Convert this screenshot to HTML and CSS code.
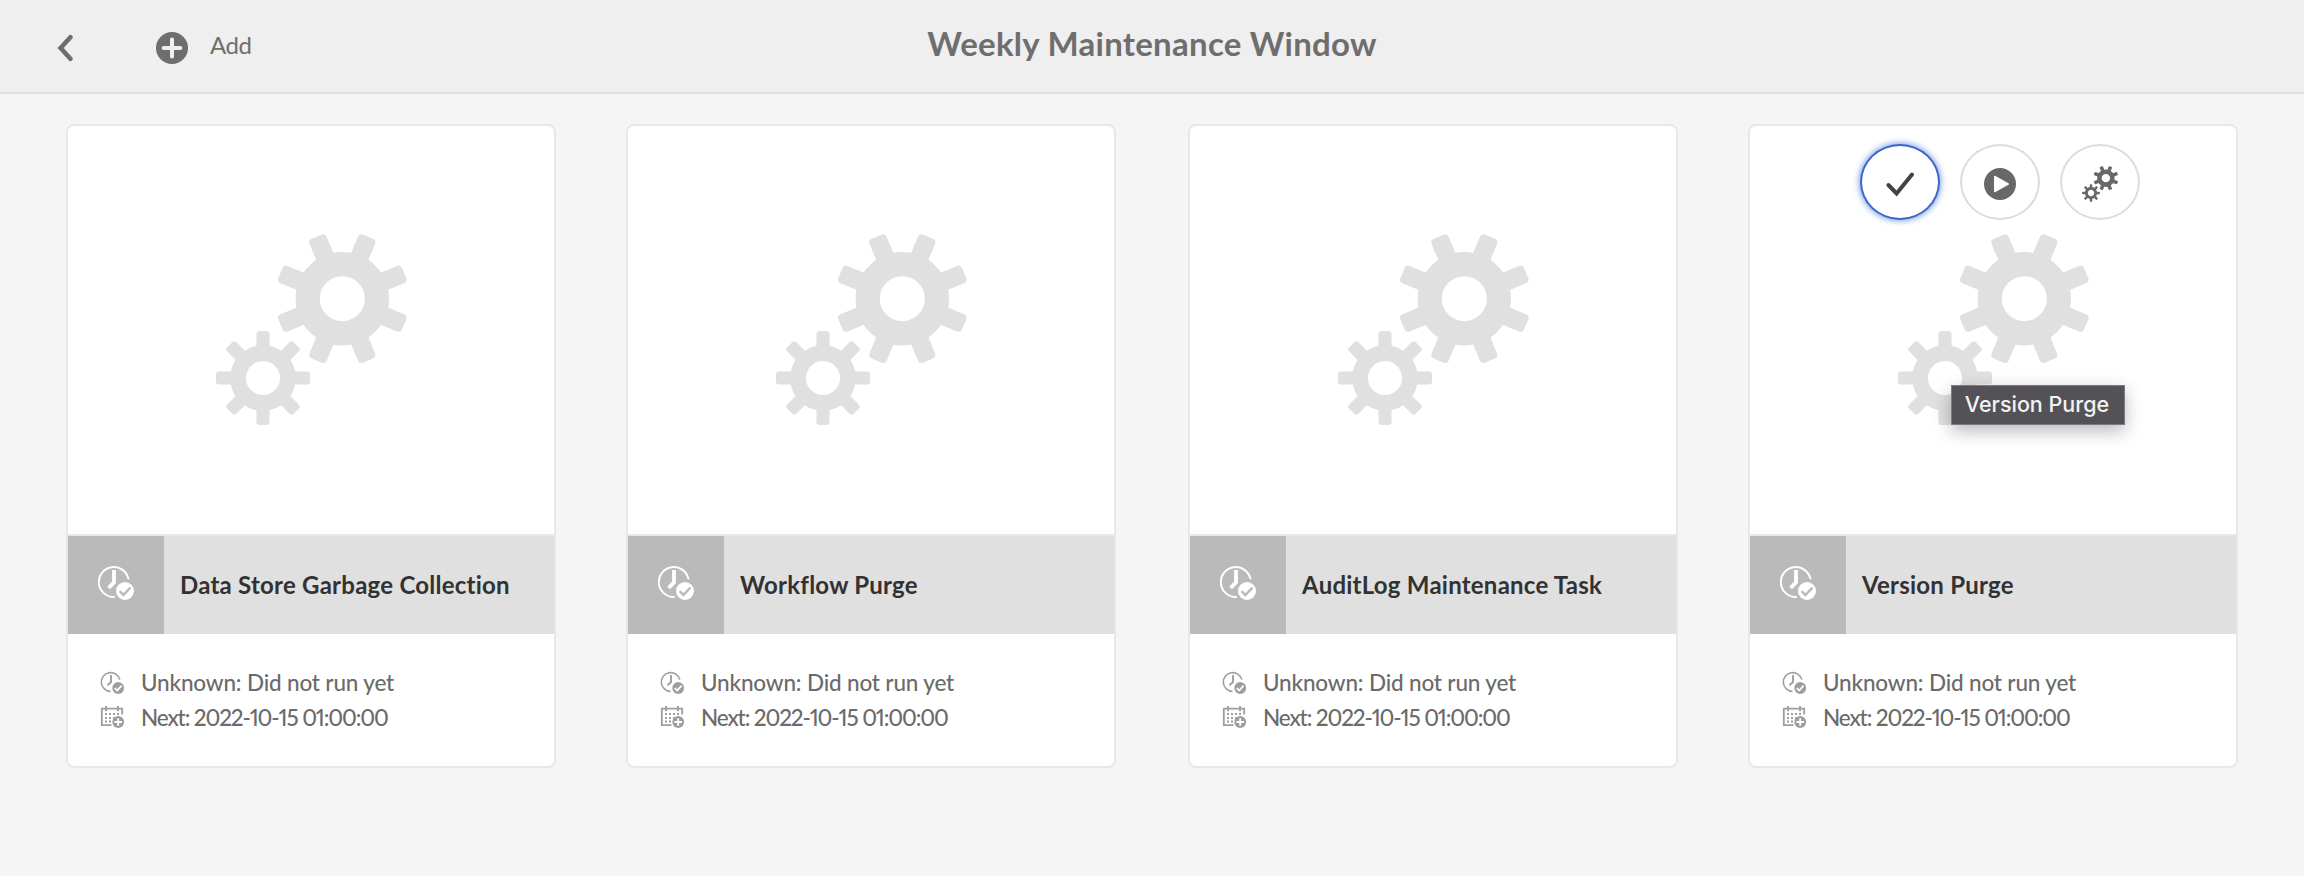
FILE: index.html
```
<!DOCTYPE html>
<html lang="en">
<head>
<meta charset="utf-8">
<title>Weekly Maintenance Window</title>
<link rel="stylesheet" href="styles.css">
</head>
<body>
<svg class="defs" aria-hidden="true">
  <symbol id="gears" viewBox="0 0 192 192">
    <g transform="translate(127.3 64.7)">
      <circle r="34.6" fill="none" stroke="currentColor" stroke-width="24.2"/>
      <g id="big-teeth">
        <rect id="big-tooth" x="-9.3" y="-67" width="18.6" height="27" rx="4" transform="rotate(22.5)"/>
        <use href="#big-tooth" transform="rotate(45)"/><use href="#big-tooth" transform="rotate(90)"/>
        <use href="#big-tooth" transform="rotate(135)"/><use href="#big-tooth" transform="rotate(180)"/>
        <use href="#big-tooth" transform="rotate(225)"/><use href="#big-tooth" transform="rotate(270)"/>
        <use href="#big-tooth" transform="rotate(315)"/>
      </g>
    </g>
    <g transform="translate(48 144)">
      <circle r="24.9" fill="none" stroke="currentColor" stroke-width="15.8"/>
      <rect id="small-tooth" x="-6.5" y="-47" width="13" height="20" rx="3"/>
      <use href="#small-tooth" transform="rotate(45)"/><use href="#small-tooth" transform="rotate(90)"/>
      <use href="#small-tooth" transform="rotate(135)"/><use href="#small-tooth" transform="rotate(180)"/>
      <use href="#small-tooth" transform="rotate(225)"/><use href="#small-tooth" transform="rotate(270)"/>
      <use href="#small-tooth" transform="rotate(315)"/>
    </g>
  </symbol>
  <symbol id="clock-lg" viewBox="0 0 36 36">
    <path d="M16 31A15 15 0 1 1 30.4 12.6" fill="none" stroke="currentColor" stroke-width="2" stroke-linecap="round"/>
    <path d="M16 4V16.4L10.6 22" fill="none" stroke="currentColor" stroke-width="3.8"/>
    <circle cx="27" cy="25" r="9"/>
    <path d="M21.6 25.2L25.4 29L32.4 21.6" fill="none" stroke="#bababa" stroke-width="2.4"/>
  </symbol>
  <symbol id="clock-sm" viewBox="0 0 24 24">
    <path d="M10.6 20.4A9.4 9.4 0 1 1 19.8 8.6" fill="none" stroke="currentColor" stroke-width="1.6"/>
    <path d="M11 4V11L7.4 14.2" fill="none" stroke="currentColor" stroke-width="1.9"/>
    <circle cx="18.2" cy="17" r="5.9"/>
    <path d="M14.8 17.2L17.2 19.6L21.6 14.6" fill="none" stroke="#fff" stroke-width="1.7"/>
  </symbol>
  <symbol id="calendar" viewBox="0 0 24 24">
    <path d="M11.5 20.2H1.8V3.6H22.2V9.5" fill="none" stroke="currentColor" stroke-width="1.8"/>
    <path d="M6 1V6.2M18 1V6.2" stroke="currentColor" stroke-width="1.8"/>
    <path d="M5 8.9h2M9 8.9h2M13 8.9h2M17 8.9h2M5 12.9h2M9 12.9h2M13 12.9h1.4M5 16.4h2M9 16.4h2" stroke="currentColor" stroke-width="2"/>
    <circle cx="18.2" cy="17" r="5.9"/>
    <path d="M18.2 13.2v7.6M14.4 17h7.6" stroke="#fff" stroke-width="1.8"/>
  </symbol>
</svg>

<header class="header">
  <svg class="back" viewBox="0 0 16 28"><path d="M13.4 3.2L3.6 14L13.4 24.8" fill="none" stroke="currentColor" stroke-width="4.6" stroke-linecap="round"/></svg>
  <svg class="add-icon" viewBox="0 0 32 32"><circle cx="16" cy="16" r="16"/><path d="M16 7.6V24.4M7.6 16H24.4" stroke="#efefef" stroke-width="4" stroke-linecap="round"/></svg>
  <span class="add">Add</span>
  <h1 class="title">Weekly Maintenance Window</h1>
</header>

<main class="cards">
  <article class="card">
    <div class="image"><svg class="gears"><use href="#gears"/></svg></div>
    <div class="band"><div class="type"><svg class="clock"><use href="#clock-lg"/></svg></div><h2 class="name">Data Store Garbage Collection</h2></div>
    <div class="props">
      <div class="prop"><svg class="small"><use href="#clock-sm"/></svg><span>Unknown: Did not run yet</span></div>
      <div class="prop"><svg class="small"><use href="#calendar"/></svg><span class="next">Next: 2022-10-15 01:00:00</span></div>
    </div>
  </article>
  <article class="card">
    <div class="image"><svg class="gears"><use href="#gears"/></svg></div>
    <div class="band"><div class="type"><svg class="clock"><use href="#clock-lg"/></svg></div><h2 class="name">Workflow Purge</h2></div>
    <div class="props">
      <div class="prop"><svg class="small"><use href="#clock-sm"/></svg><span>Unknown: Did not run yet</span></div>
      <div class="prop"><svg class="small"><use href="#calendar"/></svg><span class="next">Next: 2022-10-15 01:00:00</span></div>
    </div>
  </article>
  <article class="card card-third">
    <div class="image"><svg class="gears"><use href="#gears"/></svg></div>
    <div class="band"><div class="type"><svg class="clock"><use href="#clock-lg"/></svg></div><h2 class="name">AuditLog Maintenance Task</h2></div>
    <div class="props">
      <div class="prop"><svg class="small"><use href="#clock-sm"/></svg><span>Unknown: Did not run yet</span></div>
      <div class="prop"><svg class="small"><use href="#calendar"/></svg><span class="next">Next: 2022-10-15 01:00:00</span></div>
    </div>
  </article>
  <article class="card">
    <div class="image"><svg class="gears"><use href="#gears"/></svg></div>
    <div class="band"><div class="type"><svg class="clock"><use href="#clock-lg"/></svg></div><h2 class="name">Version Purge</h2></div>
    <div class="props">
      <div class="prop"><svg class="small"><use href="#clock-sm"/></svg><span>Unknown: Did not run yet</span></div>
      <div class="prop"><svg class="small"><use href="#calendar"/></svg><span class="next">Next: 2022-10-15 01:00:00</span></div>
    </div>
    <div class="actions">
      <button class="action focused" aria-label="Select"><svg class="action-icon" viewBox="0 0 36 36"><path d="M6.4 19L14.6 27.4L30 8.6" fill="none" stroke="currentColor" stroke-width="4" stroke-linecap="round"/></svg></button>
      <button class="action" aria-label="Run"><svg class="action-icon" viewBox="0 0 36 36"><circle cx="18" cy="18" r="16"/><path d="M13 10.8V25.2L26 18Z" fill="#fff" stroke="#fff" stroke-width="2" stroke-linejoin="round"/></svg></button>
      <button class="action" aria-label="Configure"><svg class="action-icon"><use href="#gears"/></svg></button>
    </div>
    <div class="tooltip">Version Purge</div>
  </article>
</main>
</body>
</html>
```
FILE: styles.css
```
* { box-sizing: border-box; }
body {
  margin: 0;
  min-height: 100vh;
  background: #f5f5f5;
  font-family: Lato, "Open Sans", sans-serif;
}
svg { display: block; flex: none; fill: currentColor; }
.defs { position: absolute; width: 0; height: 0; }

.header {
  position: relative;
  display: flex;
  align-items: center;
  height: 94px;
  padding: 4px 0 0 57px;
  background: #efefef;
  border-bottom: 2px solid #dfdfdf;
  color: #6e6e6e;
}
.back { width: 16px; height: 28px; }
.add-icon { width: 32px; height: 32px; margin-left: 83px; }
.add { margin: 0 0 6px 22px; font-size: 24px; line-height: 32px; letter-spacing: -.4px; }
.title {
  position: absolute;
  inset: 0;
  margin: 0;
  font-size: 33px;
  line-height: 86px;
  font-weight: 700;
  letter-spacing: .27px;
  text-align: center;
}

.cards { display: flex; gap: 70px; padding: 30px 66px; }
.card {
  position: relative;
  flex: none;
  width: 490px;
  height: 644px;
  background: #fff;
  border: 2px solid #e8e8e8;
  border-radius: 8px;
}
.card-third { margin-left: 2px; }
.image {
  display: flex;
  align-items: center;
  justify-content: center;
  height: 410px;
  border-bottom: 2px solid #e8e8e8;
  color: #e0e0e0;
}
.gears { width: 192px; height: 192px; }
.band { display: flex; height: 98px; background: #e0e0e0; }
.type { width: 96px; padding: 30px; background: #bababa; color: #fff; }
.clock { width: 36px; height: 36px; }
.name {
  margin: 0 0 0 16px;
  font-size: 24px;
  line-height: 98px;
  font-weight: 700;
  letter-spacing: .24px;
  white-space: nowrap;
  color: #323232;
}
.props { padding: 32px 32px 0; }
.prop {
  display: flex;
  align-items: center;
  gap: 17px;
  height: 34px;
  font-size: 22.5px;
  font-weight: 500;
  line-height: 34px;
  letter-spacing: -.16px;
  white-space: nowrap;
  color: #6b6b6b;
}
.small { width: 24px; height: 24px; color: #9e9e9e; }
.next { font-variant-numeric: proportional-nums; letter-spacing: -1.12px; padding-top: 1px; }

.actions { position: absolute; top: 18px; left: 110px; display: flex; gap: 20px; }
.action {
  display: flex;
  align-items: center;
  justify-content: center;
  width: 80px;
  height: 76px;
  padding: 4px 0 0;
  background: #fff;
  border: 2px solid #dcdcdc;
  border-radius: 50%;
  color: #686868;
}
.focused { border-color: #3d68ca; box-shadow: 0 0 6px 1px #7f9fe6; color: #434343; }
.action-icon { width: 36px; height: 36px; }
.tooltip {
  position: absolute;
  top: 259px;
  left: 201px;
  width: 174px;
  height: 40px;
  padding-right: 2px;
  background: #545257;
  border: 1px solid #7c7b7f;
  box-shadow: 0 6px 18px rgba(0, 0, 0, .28);
  color: #f2f2f2;
  font: 500 21.5px/37px Inter, sans-serif;
  text-align: center;
  white-space: nowrap;
}
```
